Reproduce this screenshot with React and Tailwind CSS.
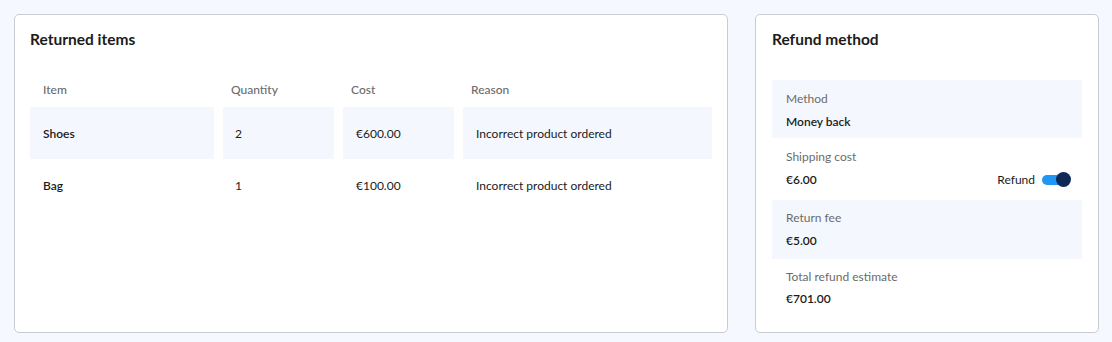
const items = [
  { name: 'Shoes', qty: 2, cost: '€600.00', reason: 'Incorrect product ordered' },
  { name: 'Bag', qty: 1, cost: '€100.00', reason: 'Incorrect product ordered' },
]

function Toggle() {
  return (
    <span className="relative inline-flex h-[15px] w-[29px] items-center">
      <span className="h-[10px] w-[22px] rounded-full bg-[#2196f3]" />
      <span className="absolute right-0 top-0 size-[15px] rounded-full bg-[#0f2856]" />
    </span>
  )
}

export default function App() {
  return (
    <div className="flex h-[342px] w-[1112px] gap-[27px] bg-[#f5f9ff] pb-[9px] pl-[14px] pr-[13px] pt-[14px] font-['Lato',sans-serif] text-[#1b1b1b]">
      <section className="flex w-[714px] flex-col rounded-[5px] border border-[#c9ccd1] bg-white px-[15px] pt-[12px]">
        <h2 className="h-[24px] pt-[1px] text-[15.5px] leading-[22px] font-bold">Returned items</h2>

        <div className="mt-[30px] grid grid-cols-[184px_111px_111px_249px] gap-x-[9px] text-[12px]">
          <div className="flex h-[26px] items-start pl-[13px] font-medium text-[#6b6b6b]">Item</div>
          <div className="flex h-[26px] items-start pl-[8px] font-medium text-[#6b6b6b]">Quantity</div>
          <div className="flex h-[26px] items-start pl-[8px] font-medium text-[#6b6b6b]">Cost</div>
          <div className="flex h-[26px] items-start pl-[8px] font-medium text-[#6b6b6b]">Reason</div>

          {items.map((it, i) => (
            <div key={it.name} className="contents">
              <div className={`flex h-[52px] items-center pl-[13px] pt-[2px] font-semibold ${i % 2 === 0 ? 'bg-[#f4f8fe]' : ''}`}>{it.name}</div>
              <div className={`flex h-[52px] items-center pl-[12px] pt-[2px] ${i % 2 === 0 ? 'bg-[#f4f8fe]' : ''}`}>{it.qty}</div>
              <div className={`flex h-[52px] items-center pl-[13px] pt-[2px] ${i % 2 === 0 ? 'bg-[#f4f8fe]' : ''}`}>{it.cost}</div>
              <div className={`flex h-[52px] items-center pl-[13px] pt-[2px] ${i % 2 === 0 ? 'bg-[#f4f8fe]' : ''}`}>{it.reason}</div>
            </div>
          ))}
        </div>
      </section>

      <section className="flex w-[344px] flex-col rounded-[5px] border border-[#c9ccd1] bg-white px-[16px] pt-[12px]">
        <h2 className="h-[24px] pt-[1px] text-[15.5px] leading-[22px] font-bold">Refund method</h2>

        <div className="mt-[29px] flex flex-col text-[12px]">
          <div className="flex h-[58px] flex-col justify-center gap-[5px] bg-[#f4f8fe] px-[14px] pt-[2px]">
            <span className="text-[#6b6b6b]">Method</span>
            <span className="font-semibold">Money back</span>
          </div>
          <div className="flex h-[62px] flex-col justify-center gap-[5px] px-[14px] pb-[2px]">
            <span className="text-[#6b6b6b]">Shipping cost</span>
            <div className="flex items-center justify-between">
              <span className="font-semibold">€6.00</span>
              <span className="mr-[-3px] flex items-center gap-[7px]">
                <span>Refund</span>
                <Toggle />
              </span>
            </div>
          </div>
          <div className="flex h-[59px] flex-col justify-center gap-[5px] bg-[#f4f8fe] px-[14px]">
            <span className="text-[#6b6b6b]">Return fee</span>
            <span className="font-semibold">€5.00</span>
          </div>
          <div className="flex h-[58px] flex-col justify-center gap-[4px] px-[14px]">
            <span className="text-[#6b6b6b]">Total refund estimate</span>
            <span className="font-semibold">€701.00</span>
          </div>
        </div>
      </section>
    </div>
  )
}
